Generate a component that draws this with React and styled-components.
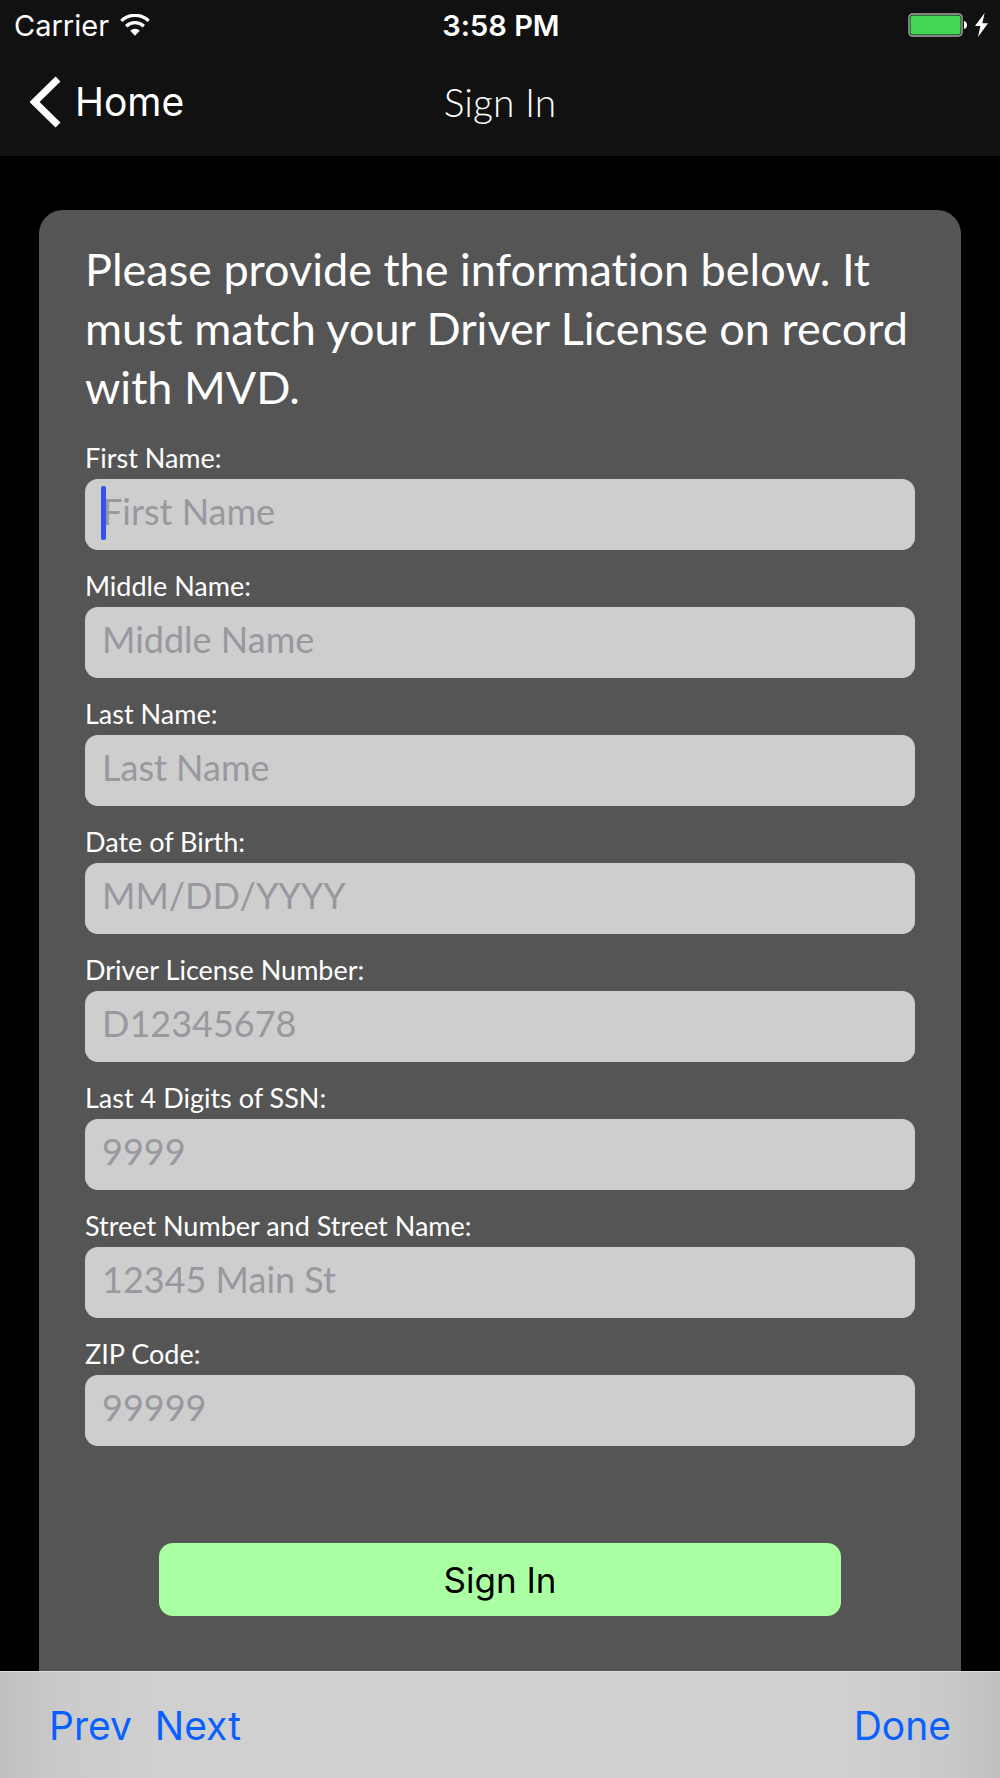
import React, { useState } from "react";
import styled, { createGlobalStyle } from "styled-components";

const GlobalStyle = createGlobalStyle`
  *, *::before, *::after {
    box-sizing: border-box;
  }

  body {
    margin: 0;
    background: #000;
    color: #fff;
    font-family: Lato, "Open Sans", sans-serif;
    font-variant-ligatures: none;
  }

  button, input {
    font: inherit;
  }
`;

const Screen = styled.div`
  display: flex;
  flex-direction: column;
  min-height: 100vh;
`;

const Header = styled.header`
  background: #111;
  font-family: Inter, sans-serif;
`;

const StatusBar = styled.div`
  display: grid;
  grid-template-columns: 1fr auto 1fr;
  align-items: center;
  height: 50px;
  padding: 0 12px 0 14px;
  font-size: 29px;
`;

const StatusGroup = styled.div`
  display: flex;
  align-items: center;
  justify-content: ${({ $end }) => ($end ? "flex-end" : "flex-start")};
  gap: ${({ $end }) => ($end ? "7px" : "11px")};
`;

const Time = styled.time`
  font-weight: 600;
`;

const NavBar = styled.nav`
  display: grid;
  grid-template-columns: 1fr auto 1fr;
  align-items: center;
  height: 106px;
  padding: 0 30px 3px;
`;

const BackButton = styled.button`
  display: flex;
  align-items: center;
  justify-self: start;
  gap: 14px;
  padding: 0;
  border: none;
  background: none;
  color: #fff;
  font-size: 39px;
  cursor: pointer;
`;

const Title = styled.h1`
  margin: 0;
  font-family: Lato, sans-serif;
  font-size: 39px;
  font-weight: 300;
`;

const Main = styled.main`
  display: flex;
  flex: 1;
  flex-direction: column;
  padding: 54px 39px 0;
`;

const Card = styled.form`
  flex: 1;
  padding: 30px 46px 54px;
  border-radius: 24px 24px 0 0;
  background: #555;
`;

const Intro = styled.p`
  margin: 0 0 23px;
  font-size: 45px;
  line-height: 59px;
`;

const Field = styled.div`
  margin-bottom: 18px;
`;

const Label = styled.label`
  display: block;
  padding-bottom: 4px;
  font-size: 27px;
  line-height: 35px;
`;

const InputBox = styled.div`
  position: relative;
`;

const Input = styled.input`
  display: block;
  width: 100%;
  height: 71px;
  padding: 0 17px 8px;
  border: none;
  border-radius: 13px;
  outline: none;
  background: #cecece;
  color: #000;
  caret-color: transparent;
  font-size: 36px;

  &::placeholder {
    color: #98989e;
    opacity: 1;
  }
`;

const Caret = styled.span`
  position: absolute;
  top: 7px;
  left: 16px;
  width: 5px;
  height: 54px;
  border-radius: 2px;
  background: #3253f0;
`;

const SubmitRow = styled.div`
  padding: 79px 74px 0;
`;

const SubmitButton = styled.button`
  width: 100%;
  height: 73px;
  padding: 0;
  border: none;
  border-radius: 14px;
  background: #abffa3;
  color: #000;
  font-family: Inter, sans-serif;
  font-size: 35px;
  cursor: pointer;
`;

const Toolbar = styled.div`
  display: flex;
  position: sticky;
  bottom: 0;
  align-items: center;
  gap: 23px;
  height: 107px;
  padding: 0 49px;
  border-top: 1px solid #dcdcdc;
  background: linear-gradient(90deg, #c0c0c0, #cacaca 6%, #d0d0d0 16%, #d0d0d0 84%, #cacaca 94%, #c0c0c0);
  font-family: Inter, sans-serif;
`;

const ToolbarButton = styled.button`
  margin-left: ${({ $end }) => ($end ? "auto" : "0")};
  padding: 0;
  border: none;
  background: none;
  color: #0a60ff;
  font-size: 39px;
  cursor: pointer;
`;

const WifiIcon = () => (
  <svg width="30" height="22" viewBox="0 0 30 22" aria-hidden="true">
    <path d="M1.4 6.9a19.5 19.5 0 0 1 27.2 0" fill="none" stroke="#fff" strokeWidth="3.4" />
    <path d="M6.2 12.2a12.6 12.6 0 0 1 17.6 0" fill="none" stroke="#fff" strokeWidth="3.4" />
    <path d="M15 21.8l-4.8-5a6.8 6.8 0 0 1 9.6 0z" fill="#fff" />
  </svg>
);

const BatteryIcon = () => (
  <svg width="60" height="24" viewBox="0 0 60 24" aria-hidden="true">
    <rect x="1" y="1" width="53" height="22" rx="3.5" fill="none" stroke="#aaa" strokeWidth="1.4" />
    <rect x="2.4" y="2.4" width="50.2" height="19.2" rx="2" fill="#44d553" />
    <path d="M56 8c4 .8 4 7.2 0 8z" fill="#fff" />
  </svg>
);

const BoltIcon = () => (
  <svg width="13" height="24" viewBox="0 0 13 24" aria-hidden="true">
    <path d="M9.6 0L0 13h5.4L3 24l10-13.8H7.4z" fill="#fff" />
  </svg>
);

const BackIcon = () => (
  <svg width="31" height="52" viewBox="0 0 31 52" aria-hidden="true">
    <path d="M28 3L4.6 26 28 49" fill="none" stroke="#fff" strokeWidth="7" />
  </svg>
);

const fields = [
  { id: "firstName", label: "First Name:", placeholder: "First Name" },
  { id: "middleName", label: "Middle Name:", placeholder: "Middle Name" },
  { id: "lastName", label: "Last Name:", placeholder: "Last Name" },
  { id: "birthDate", label: "Date of Birth:", placeholder: "MM/DD/YYYY" },
  { id: "license", label: "Driver License Number:", placeholder: "D12345678" },
  { id: "ssn", label: "Last 4 Digits of SSN:", placeholder: "9999" },
  { id: "street", label: "Street Number and Street Name:", placeholder: "12345 Main St" },
  { id: "zip", label: "ZIP Code:", placeholder: "99999" },
];

const App = () => {
  const [values, setValues] = useState({});
  const [active, setActive] = useState(0);

  const handleChange = (e) => {
    setValues({ ...values, [e.target.id]: e.target.value });
  };

  const moveTo = (index) => {
    const next = Math.min(Math.max(index, 0), fields.length - 1);
    setActive(next);
    document.getElementById(fields[next].id).focus();
  };

  return (
    <Screen>
      <GlobalStyle />
      <Header>
        <StatusBar>
          <StatusGroup>
            <span>Carrier</span>
            <WifiIcon />
          </StatusGroup>
          <Time>3:58 PM</Time>
          <StatusGroup $end>
            <BatteryIcon />
            <BoltIcon />
          </StatusGroup>
        </StatusBar>
        <NavBar>
          <BackButton type="button">
            <BackIcon />
            Home
          </BackButton>
          <Title>Sign In</Title>
        </NavBar>
      </Header>

      <Main>
        <Card id="signIn" onSubmit={(e) => e.preventDefault()}>
          <Intro>
            Please provide the information below. It must match your Driver License on record with MVD.
          </Intro>
          {fields.map((field, index) => (
            <Field key={field.id}>
              <Label htmlFor={field.id}>{field.label}</Label>
              <InputBox>
                <Input
                  id={field.id}
                  placeholder={field.placeholder}
                  value={values[field.id] || ""}
                  onChange={handleChange}
                  onFocus={() => setActive(index)}
                />
                {index === active && !values[field.id] && <Caret />}
              </InputBox>
            </Field>
          ))}
          <SubmitRow>
            <SubmitButton type="submit">Sign In</SubmitButton>
          </SubmitRow>
        </Card>
      </Main>

      <Toolbar>
        <ToolbarButton type="button" onClick={() => moveTo(active - 1)}>Prev</ToolbarButton>
        <ToolbarButton type="button" onClick={() => moveTo(active + 1)}>Next</ToolbarButton>
        <ToolbarButton type="button" $end onClick={() => setActive(-1)}>Done</ToolbarButton>
      </Toolbar>
    </Screen>
  );
};

export default App;
